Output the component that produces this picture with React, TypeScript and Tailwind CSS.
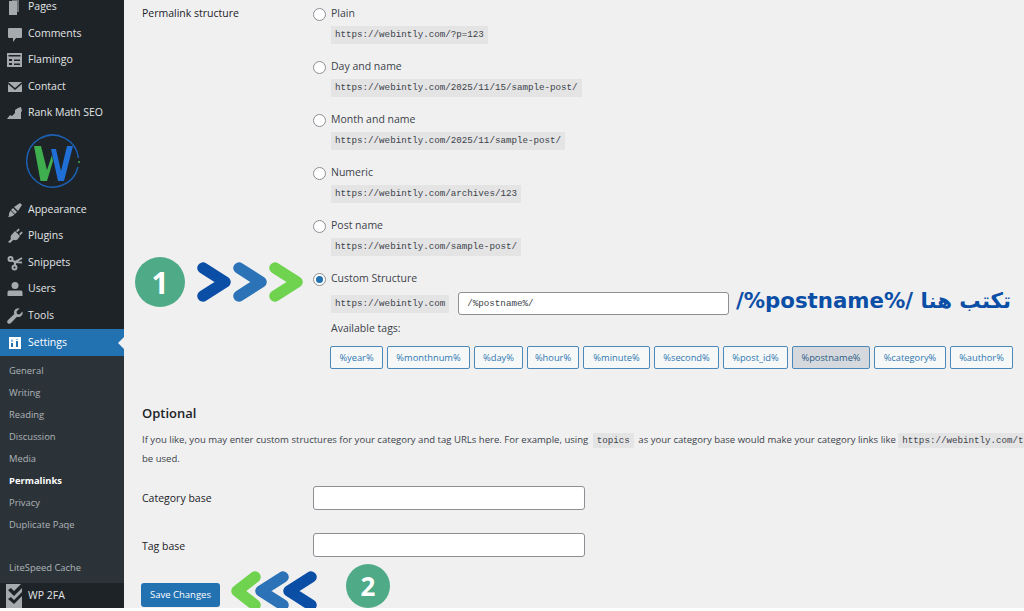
const MENU_TOP = [
  { label: "Pages", icon: "pages" },
  { label: "Comments", icon: "comments" },
  { label: "Flamingo", icon: "flamingo" },
  { label: "Contact", icon: "contact" },
  { label: "Rank Math SEO", icon: "rank" },
];

const MENU_BOTTOM = [
  { label: "Appearance", icon: "appearance" },
  { label: "Plugins", icon: "plugins" },
  { label: "Snippets", icon: "snippets" },
  { label: "Users", icon: "users" },
  { label: "Tools", icon: "tools" },
];

const SUBMENU = ["General", "Writing", "Reading", "Discussion", "Media", "Permalinks", "Privacy", "Duplicate Paqe"];

const OPTIONS = [
  { label: "Plain", url: "https://webintly.com/?p=123" },
  { label: "Day and name", url: "https://webintly.com/2025/11/15/sample-post/" },
  { label: "Month and name", url: "https://webintly.com/2025/11/sample-post/" },
  { label: "Numeric", url: "https://webintly.com/archives/123" },
  { label: "Post name", url: "https://webintly.com/sample-post/" },
];

const TAGS = [
  { label: "%year%", width: "w-[53px]" },
  { label: "%monthnum%", width: "w-[83px]" },
  { label: "%day%", width: "w-[49px]" },
  { label: "%hour%", width: "w-[52px]" },
  { label: "%minute%", width: "w-[67px]" },
  { label: "%second%", width: "w-[65px]" },
  { label: "%post_id%", width: "w-[65px]" },
  { label: "%postname%", width: "w-[78px]" },
  { label: "%category%", width: "w-[72px]" },
  { label: "%author%", width: "w-[63px]" },
];

function MenuIcon({ name }: { name: string }) {
  const props = { width: 16, height: 16, viewBox: "0 0 16 16", fill: "#a7aaad" };
  switch (name) {
    case "pages":
      return (
        <svg {...props}>
          <path d="M5 0h7v13H5z" opacity="0.6" />
          <path d="M2 2h8v14H2z" />
        </svg>
      );
    case "comments":
      return (
        <svg {...props}>
          <path d="M2 2h12a1 1 0 0 1 1 1v8a1 1 0 0 1-1 1H9l-3 4v-4H2a1 1 0 0 1-1-1V3a1 1 0 0 1 1-1z" />
        </svg>
      );
    case "flamingo":
      return (
        <svg {...props}>
          <path fillRule="evenodd" d="M0 1h15v14H0zM1.500 3v1.500h12V3zM2 7v2h3V7zm5 .5V9h6V7.500zM2 11v2h3v-2zm5 .5V13h6v-1.500z" />
        </svg>
      );
    case "contact":
      return (
        <svg {...props}>
          <path d="M1 3h14L8 9z" />
          <path d="M1 5l7 6 7-6v8H1z" />
        </svg>
      );
    case "rank":
      return (
        <svg {...props}>
          <path d="M0 14l3-4 2 1 3-3V5l3-2 3-1 1 4-1 1v7z" />
        </svg>
      );
    case "appearance":
      return (
        <svg {...props}>
          <path d="M7 5l6-4 2 2-4 6z" />
          <path d="M6 6l4 4-2 2-4-4z" />
          <path d="M3.500 8.500l4 4c-1.500 1.500-3 2.500-6.500 2.500 1-1 1-2 1-3.500z" />
        </svg>
      );
    case "plugins":
      return (
        <svg {...props}>
          <path d="M8 3l5 5-2.500 3.500c-1.500 1-3 1-4 .3L3 15l-2-1 3-3c-.7-1.300-.5-2.500.4-4z" />
          <path d="M9 3l2.500-2.500 1.300 1.300L10.300 4.300zM12 6l2.500-2.500 1.300 1.300L13.300 7.300z" />
        </svg>
      );
    case "snippets":
      return (
        <svg {...props} fill="none" stroke="#a7aaad" strokeWidth="2">
          <circle cx="3.500" cy="4" r="2" />
          <circle cx="7.500" cy="12.500" r="2" />
          <path d="M5 5.500l3 1.500 7-4M8 10.500V7l7 .5" />
        </svg>
      );
    case "users":
      return (
        <svg {...props}>
          <circle cx="8" cy="4.500" r="3.500" />
          <path d="M2 9.500h12c1 0 1.500 1 1.500 2V15H.5v-3.500c0-1 .5-2 1.500-2z" />
        </svg>
      );
    case "tools":
      return (
        <svg {...props}>
          <path d="M15.500 3.500c.5 2-.3 4-2 5-1.300.7-2.500.7-3.500.2L4 15c-1 1-2.500 1-3.300.2S0 13 1 12l6.300-6c-.5-1-.5-2.200.2-3.500 1-1.700 3-2.500 5-2L9.500 3.500 10 6l2.500.5z" />
        </svg>
      );
    default:
      return null;
  }
}

function MenuRow({ label, icon }: { label: string; icon: string }) {
  return (
    <div className="flex h-[26.5px] items-center pl-[7px] text-[#e2e4e6]">
      <span className="flex w-[20px] justify-start">
        <MenuIcon name={icon} />
      </span>
      <span className="ml-[1px]">{label}</span>
    </div>
  );
}

function Chevrons({ direction }: { direction: "right" | "left" }) {
  const paths =
    direction === "right"
      ? [
          { d: "M7 8l22 14L7 36", color: "#0b4ea6" },
          { d: "M43 8l22 14-22 14", color: "#2b72b7" },
          { d: "M79 8l22 14-22 14", color: "#6fd34f" },
        ]
      : [
          { d: "M80 8L58 22l22 14", color: "#0b4ea6" },
          { d: "M52 8L30 22l22 14", color: "#2b72b7" },
          { d: "M24 8L6 22l18 14", color: "#6fd34f" },
        ];
  return (
    <svg width="108" height="44" viewBox="0 0 108 44" fill="none" strokeWidth="11.500" strokeLinecap="round" strokeLinejoin="round">
      {paths.map((p) => (
        <path key={p.d} d={p.d} stroke={p.color} />
      ))}
    </svg>
  );
}

function Step({ n, className }: { n: string; className: string }) {
  return (
    <div className={`absolute flex items-center justify-center rounded-full bg-[#4fab87] font-bold text-white ${className}`}>
      {n}
    </div>
  );
}

function UrlCode({ children }: { children: string }) {
  return (
    <code className="inline-flex h-[18px] items-center bg-[#e4e4e5] px-[4px] font-['Liberation_Mono',monospace] text-[9.2px] text-[#3c434a]">
      {children}
    </code>
  );
}

function Radio({ checked }: { checked?: boolean }) {
  return (
    <span className="flex h-[13px] w-[13px] shrink-0 items-center justify-center rounded-full border border-[#8c8f94] bg-white">
      {checked && <span className="h-[7px] w-[7px] rounded-full bg-[#2271b1]" />}
    </span>
  );
}

function Sidebar() {
  return (
    <aside className="flex h-full w-[124px] shrink-0 flex-col overflow-hidden bg-[#1d2327] text-[10.5px]">
      <div className="-mt-[6px]">
        {MENU_TOP.map((item) => (
          <MenuRow key={item.label} {...item} />
        ))}
      </div>

      <div className="flex h-[70px] items-center pl-[26px]">
        <svg width="54" height="54" viewBox="0 0 54 54" className="-mt-[2px]">
          <path d="M52.500 24A26 26 0 1 0 52 33" fill="none" stroke="#1d5fb0" strokeWidth="1.500" />
          <path d="M53 27v2" stroke="#3fae4f" strokeWidth="1.500" />
          <path d="M8 12h7l6 24 5-15 1 6-6 20h-6.500z" fill="#3fae4f" />
          <path d="M25 15h5l5 22 6-25h6l-9 35h-6z" fill="#1f6fd6" />
        </svg>
      </div>

      <div>
        {MENU_BOTTOM.map((item) => (
          <MenuRow key={item.label} {...item} />
        ))}
      </div>

      <div className="relative flex h-[27px] items-center bg-[#2271b1] pl-[9px] font-medium text-white">
        <span className="flex h-[12px] w-[12px] items-center justify-center bg-white">
          <svg width="10" height="10" viewBox="0 0 10 10" fill="#2271b1">
            <path d="M1 5h2v4H1zM1.500 1.500h1V4h-1zM6 3h2v6H6zM6.500 1h1v1h-1z" />
          </svg>
        </span>
        <span className="ml-[7px]">Settings</span>
        <span className="absolute right-0 top-[8px] h-0 w-0 border-y-[6px] border-r-[6px] border-y-transparent border-r-[#f0f0f1]" />
      </div>

      <div className="flex flex-1 flex-col bg-[#2c3338] pt-[4px] text-[9.4px] text-[#aeb3b8]">
        {SUBMENU.map((item) => (
          <div key={item} className={`flex h-[22px] items-center pl-[9px] ${item === "Permalinks" ? "font-bold text-white" : ""}`}>
            {item}
          </div>
        ))}
        <div className="mt-[21px] flex h-[22px] items-center pl-[9px]">LiteSpeed Cache</div>
      </div>

      <div className="flex h-[25px] items-center bg-[#1d2327] pl-[6px] text-[#e2e4e6]">
        <svg width="17" height="25" viewBox="0 0 17 25">
          <path d="M0 1h16v24H0z" fill="#a7aaad" />
          <path d="M2 7l3-2 3 3 7-7h2v3L8 13zM2 16l3-2 3 3 9-9v4l-9 9z" fill="#1d2327" />
        </svg>
        <span className="ml-[5px]">WP 2FA</span>
      </div>
    </aside>
  );
}

export default function App() {
  return (
    <div className="relative flex h-[608px] w-[1024px] overflow-hidden bg-[#f0f0f1] font-['Open_Sans','Noto_Sans',sans-serif] text-[#3c434a]">
      <Sidebar />

      <main className="min-w-0 flex-1 pl-[18px] text-[10.5px]">
        <div className="flex pt-[4px]">
          <div className="h-[18px] w-[171px] shrink-0 leading-[18px] font-medium text-[#1d2327]">Permalink structure</div>
          <div className="mt-[1px] flex flex-col gap-[10px]">
            {OPTIONS.map((o) => (
              <div key={o.label}>
                <div className="flex h-[18px] items-center gap-[5px]">
                  <Radio />
                  <span>{o.label}</span>
                </div>
                <div className="mt-[3px] h-[22px] pl-[18px] leading-none">
                  <UrlCode>{o.url}</UrlCode>
                </div>
              </div>
            ))}

            <div>
              <div className="flex h-[18px] items-center gap-[5px]">
                <Radio checked />
                <span className="font-medium">Custom Structure</span>
              </div>
              <div className="mt-[4px] flex items-center pl-[18px]">
                <UrlCode>https://webintly.com</UrlCode>
                <div className="ml-[9px] flex h-[23px] w-[271px] items-center rounded-[3px] border border-[#8c8f94] bg-white px-[8px] font-['Liberation_Mono',monospace] text-[9.2px]">
                  /%postname%/
                </div>
              </div>
              <div className="mt-[4px] h-[18px] pl-[18px] leading-[18px]">Available tags:</div>
              <div className="mt-[9px] flex w-[700px] gap-[4px] pl-[17px]">
                {TAGS.map((t) => (
                  <div
                    key={t.label}
                    className={`flex h-[23px] shrink-0 items-center justify-center rounded-[2px] border border-[#4a89ba] text-[9.3px] ${t.width} ${
                      t.label === "%postname%" ? "bg-[#d5d9de] text-[#2c5a85]" : "bg-[#f6f7f7] text-[#2f78b3]"
                    }`}
                  >
                    {t.label}
                  </div>
                ))}
              </div>
            </div>
          </div>
        </div>

        <h2 className="mt-[35px] text-[13px] leading-[18px] font-semibold text-[#1d2327]">Optional</h2>
        <div className="mt-[9px] w-[900px] whitespace-nowrap text-[9.55px] leading-[18px]">
          <p>
            If you like, you may enter custom structures for your category and tag URLs here. For example, using{" "}
            <span className="mx-[2px] bg-[#e4e4e5] px-[4px] py-[2px] font-['Liberation_Mono',monospace] text-[9.2px]">topics</span> as your category base would make your category links like{" "}
            <span className="bg-[#e4e4e5] px-[4px] py-[2px] font-['Liberation_Mono',monospace] text-[9.2px]">https://webintly.com/t</span>
          </p>
          <p>be used.</p>
        </div>

        <div className="mt-[18px] flex h-[24px] items-center">
          <label className="w-[171px] shrink-0 pt-[2px] font-medium text-[#1d2327]">Category base</label>
          <div className="h-[24px] w-[272px] rounded-[3px] border border-[#8c8f94] bg-white" />
        </div>
        <div className="mt-[23px] flex h-[24px] items-center">
          <label className="w-[171px] shrink-0 pt-[3px] font-medium text-[#1d2327]">Tag base</label>
          <div className="h-[24px] w-[272px] rounded-[3px] border border-[#8c8f94] bg-white" />
        </div>

        <button className="mt-[26px] -ml-[1px] flex h-[24px] w-[79px] items-center justify-center rounded-[3px] bg-[#2271b1] text-[9.5px] font-medium text-white">
          Save Changes
        </button>
      </main>

      <Step n="1" className="left-[135px] top-[257px] h-[50px] w-[50px] text-[30px]" />
      <div className="absolute left-[196px] top-[260px]">
        <Chevrons direction="right" />
      </div>
      <div
        dir="rtl"
        className="absolute right-[13px] top-[286px] whitespace-nowrap font-['DejaVu_Sans',sans-serif] text-[21.3px] leading-[30px] font-bold text-[#0b4ea6]"
      >
        تكتب هنا /%postname%/
      </div>
      <div className="absolute left-[231px] top-[569px]">
        <Chevrons direction="left" />
      </div>
      <Step n="2" className="left-[346px] top-[564px] h-[44px] w-[44px] text-[26px]" />
    </div>
  );
}
